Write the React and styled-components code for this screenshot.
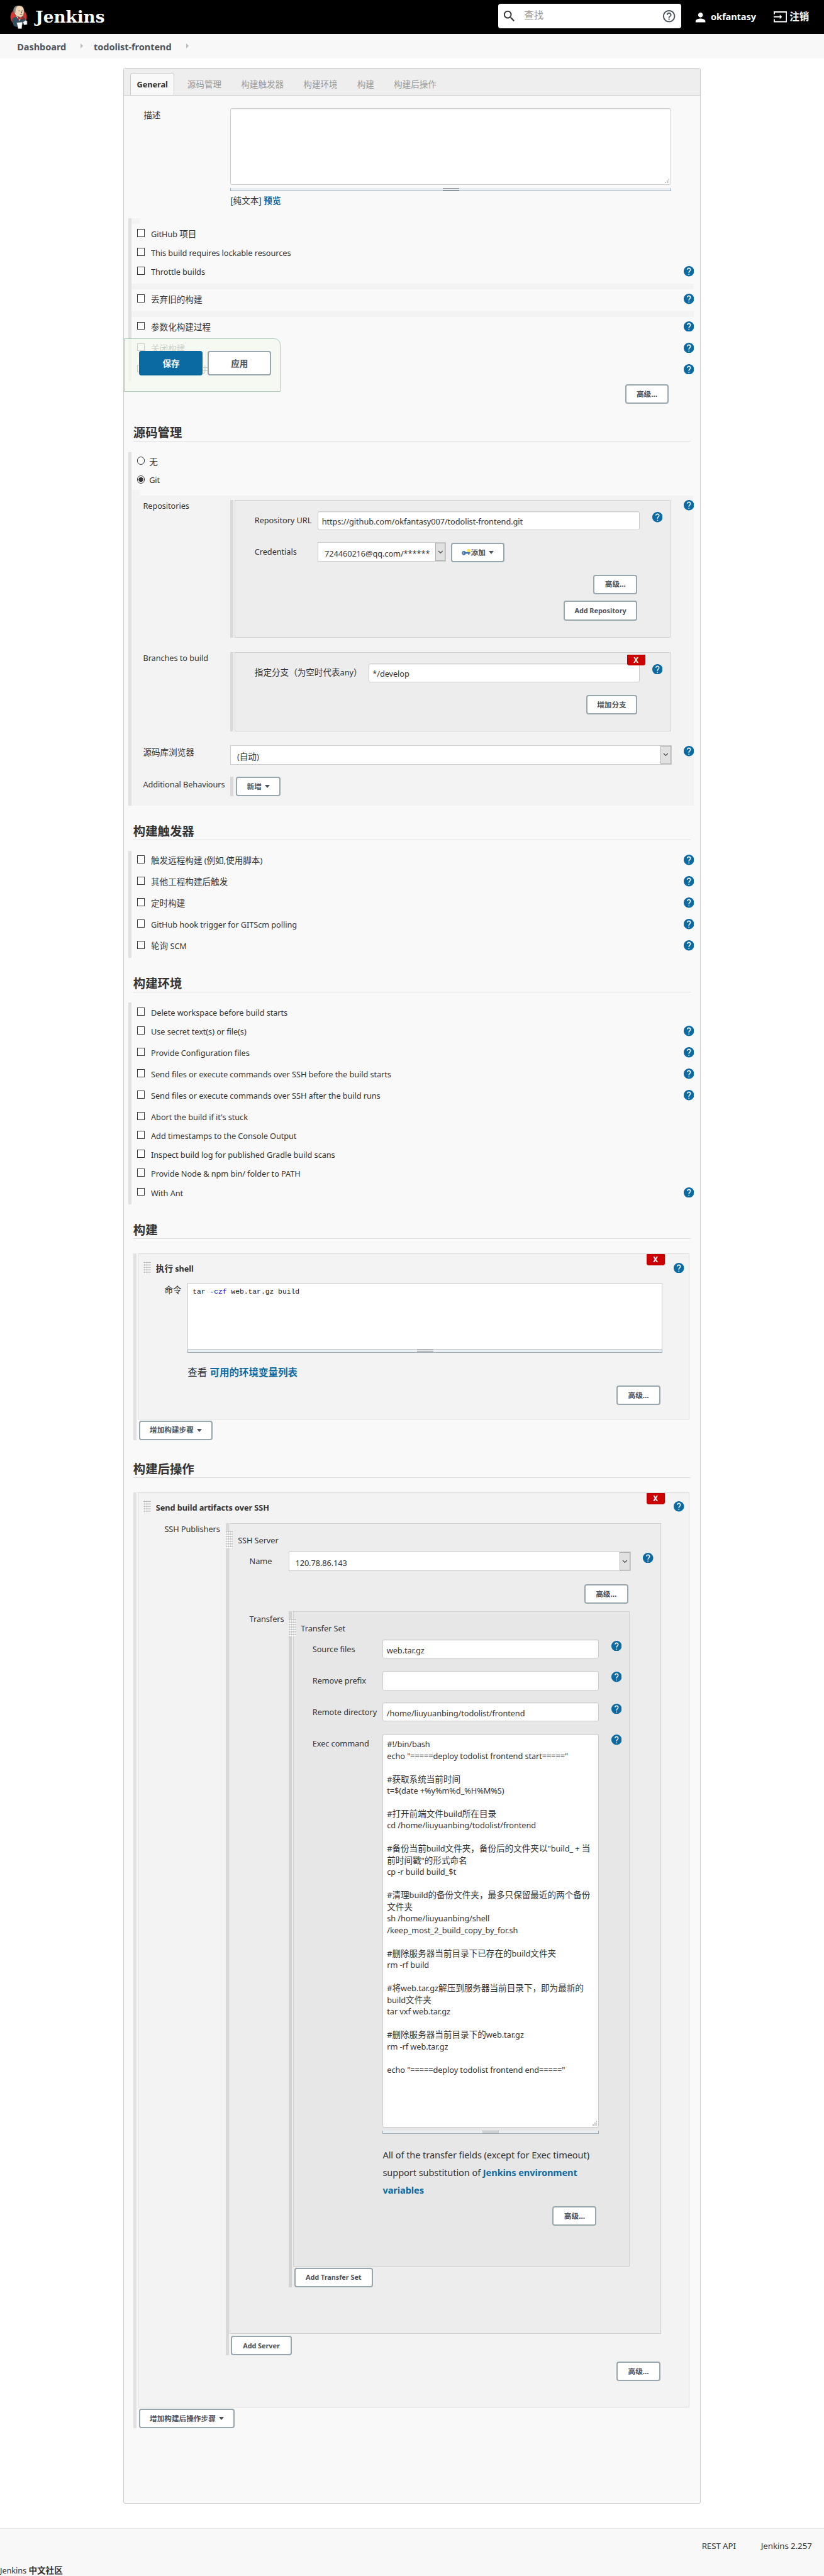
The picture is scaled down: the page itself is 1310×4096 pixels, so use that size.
import React from "react";
import styled, { createGlobalStyle, css } from "styled-components";
import { MdHelp, MdHelpOutline, MdPerson, MdSearch } from "react-icons/md";

const C = {
  text: "#333",
  blue: "#0b6aa2",
  line: "#ccc",
  slate: "#4d545d",
  buttonBorder: "#98a6ae",
};

const GlobalStyle = createGlobalStyle`
  *, *::before, *::after { box-sizing: border-box; }
  body { margin: 0; background: #f8f8f8; }
`;

const Page = styled.div`
  zoom: 0.9712;
  width: 1349px;
  height: 4217px;
  overflow: hidden;
  display: flex;
  flex-direction: column;
  background: #fff;
  color: ${C.text};
  font-family: "Noto Sans", "Noto Sans CJK SC", sans-serif;
  font-size: 14px;
  line-height: 16px;
  white-space: nowrap;
`;

/* Latin runs are set slightly smaller than the ideographs beside them. */
const Latin = styled.span`
  font-size: 0.94em;
  letter-spacing: -0.006em;
`;

function T({ children }) {
  return String(children)
    .split(/([\x20-\x7e]+)/)
    .filter(Boolean)
    .map((part, i) => (/^[\x20-\x7e]/.test(part) ? <Latin key={i}>{part}</Latin> : part));
}

/* ---------- header ---------- */

const Header = styled.header`
  flex: none;
  display: flex;
  height: 56px;
  background: #000;
  color: #fff;
  font-size: 16px;
  font-weight: 700;
`;
const Logo = styled.div`
  display: flex;
  align-items: flex-start;
  padding: 8px 0 0 16px;
  width: 815px;
`;
const LogoName = styled.span`
  margin: 3px 0 0 13px;
  font: 700 27px/32px "DejaVu Serif", serif;
`;
const Search = styled.div`
  display: flex;
  align-items: center;
  width: 300px;
  height: 40px;
  margin-top: 6px;
  padding: 0 8px 0 7px;
  border-radius: 4px;
  background: #fff;
  color: #333;
`;
const Placeholder = styled.span`
  flex: 1;
  margin-left: 12px;
  color: #999;
  font-weight: 400;
`;
const HeaderLink = styled.span`
  display: flex;
  align-items: center;
  height: 24px;
  margin: 16px 0 0 ${(p) => p.$ml}px;
  gap: ${(p) => p.$gap}px;
`;

const Breadcrumbs = styled.nav`
  flex: none;
  display: flex;
  align-items: center;
  height: 40px;
  padding: 1px 0 0 28px;
  background: #f8f8f8;
  color: ${C.slate};
  font-size: 16px;
  font-weight: 700;
`;
const Arrow = styled.i`
  margin: -2px 17px 0 24px;
  border: 4.2px solid transparent;
  border-left-color: #bbb;
  border-right-width: 0;
`;

function Butler() {
  return (
    <svg width="29" height="40" viewBox="0 0 29 40">
      <ellipse cx="14" cy="19.5" rx="13.4" ry="13.5" fill="#d33833" />
      <path d="M6 20 L3 24 L6 34 L11 36 L25 30 L25 23 L20 18 Z" fill="#335061" />
      <path d="M10 18 L15 26 L20 19 L18 16 Z" fill="#fff" />
      <path
        d="M6 9 C6 3 10 1 15 1 C20 1 23 4 23 10 C23 16 21 20 17 20 C13 20 7 18 6 9Z"
        fill="#f0d6b7"
        stroke="#222"
        strokeWidth=".6"
      />
      <path d="M6 12 C4 5 8 1 14 1 C10 3 9 6 9 12 L7 14Z" fill="#8a8a84" />
      <path d="M14 9.5h2M19 9.5h2M16 15.5q2 1 4 0M18 10l1.4 3h-1.6" stroke="#333" strokeWidth=".8" fill="none" />
      <path d="M13 19 l4 2 4-2 v5 l-4-1.500 -4 2z" fill="#d33833" stroke="#500" strokeWidth=".5" />
      <path d="M11 29 L20 28 L19 38.500 L13.500 38.500 Z" fill="#fff" stroke="#999" strokeWidth=".5" />
      <path d="M21 28 l4-3 3 1 v6 l-5 1z" fill="#f4f4f4" stroke="#444" strokeWidth=".6" />
    </svg>
  );
}

function LogoutIcon() {
  return (
    <svg width="22" height="18" viewBox="0 0 22 18" fill="none" stroke="#fff" strokeWidth="1.900">
      <path d="M1 5V1h20v16H1v-4" />
      <path d="M0 9h12" />
      <path d="M10 5.500 13.700 9 10 12.500z" fill="#fff" stroke="none" />
    </svg>
  );
}

/* ---------- panel and tabs ---------- */

const Panel = styled.main`
  position: relative;
  flex: none;
  width: 945px;
  height: 3988px;
  margin: 15px 0 40px 202px;
  border: 1px solid ${C.line};
  border-radius: 3px;
  background: #f9f9f9;
`;
const Tabs = styled.div`
  display: flex;
  align-items: flex-end;
  height: 44px;
  padding-left: 10px;
  border-bottom: 1px solid ${C.line};
  background: #eee;
  color: #999;
`;
const Tab = styled.div`
  height: 37px;
  margin: 0 10px -1px 0;
  padding: 10px 10px 0;
  border: 1px solid transparent;
  border-bottom: 0;
  ${(p) =>
    p.$active &&
    css`
      border-color: ${C.line};
      border-radius: 4px 4px 0 0;
      background: #f9f9f9;
      color: ${C.text};
      font-weight: 700;
    `}
`;

/* ---------- form primitives ---------- */

const Field = styled.div`
  display: flex;
  align-items: flex-start;
  margin-top: ${(p) => p.$mt || 0}px;
`;
const Label = styled.div`
  flex: none;
  width: ${(p) => p.$w}px;
  padding: ${(p) => p.$pt ?? 7}px 0 0 ${(p) => p.$pl || 0}px;
`;
const HelpButton = styled.span`
  display: flex;
  flex: none;
  width: 17px;
  height: 17px;
  margin: ${(p) => p.$mt ?? 1.5}px ${(p) => p.$mr || 0}px 0 ${(p) => (p.$ml === undefined ? "auto" : p.$ml + "px")};
  color: ${C.blue};
`;
function Help(props) {
  return (
    <HelpButton {...props}>
      <MdHelp viewBox="2 2 20 20" size={17} />
    </HelpButton>
  );
}

const Input = styled.div`
  flex: none;
  width: ${(p) => p.$w}px;
  height: ${(p) => p.$h || 31}px;
  padding: 7.5px 5.5px;
  border: 1px solid ${C.line};
  border-radius: 3px;
  background: #fff;
  box-shadow: inset 0 1px 1px rgba(0, 0, 0, 0.075);
`;
const SelectBox = styled.div`
  flex: none;
  display: flex;
  width: ${(p) => p.$w}px;
  height: 32px;
  padding-left: 10px;
  border: 1px solid ${C.line};
  background: #fff;
  line-height: 34px;
`;
const SelectArrow = styled.span`
  display: flex;
  align-items: center;
  justify-content: center;
  width: 17px;
  height: 30px;
  margin-left: auto;
  border: 1px solid #acacac;
  background: #e1e1e1;
`;
function Select({ w, children }) {
  return (
    <SelectBox $w={w}>
      <span><T>{children}</T></span>
      <SelectArrow>
        <svg width="9" height="6" viewBox="0 0 9 6" fill="none" stroke="#444" strokeWidth="1.200">
          <path d="M1 1 4.500 4.500 8 1" />
        </svg>
      </SelectArrow>
    </SelectBox>
  );
}

const Button = styled.span`
  flex: none;
  display: flex;
  align-items: center;
  justify-content: center;
  width: ${(p) => p.$w}px;
  height: 32px;
  margin: ${(p) => p.$mt || 0}px 0 0 ${(p) => p.$ml || 0}px;
  border: 2.1px solid ${C.buttonBorder};
  border-radius: 4px;
  background: #fff;
  color: ${C.slate};
  font-size: 12px;
  font-weight: 700;
`;
const Caret = styled.i`
  flex: none;
  margin-left: 5px;
  border: 4.2px solid transparent;
  border-top: 5.2px solid ${C.slate};
  border-bottom: 0;
`;
const RemoveButton = styled.span`
  position: absolute;
  top: ${(p) => p.$top}px;
  right: 40px;
  width: 30px;
  height: 18px;
  border: 1px solid #b00;
  border-radius: 0 0 3px 3px;
  background: #c00;
  color: #fff;
  font-size: 12px;
  font-weight: 700;
  line-height: 17px;
  text-align: center;
`;

const TextArea = styled.div`
  position: relative;
  flex: none;
  width: ${(p) => p.$w}px;
  height: ${(p) => p.$h}px;
  padding: 6.5px 6px;
  border: 1px solid ${C.line};
  border-radius: 3px;
  background: #fff;
  box-shadow: inset 0 1px 1px rgba(0, 0, 0, 0.075);
  line-height: 19.03px;
  white-space: pre;
`;
const Grip = styled.svg`
  position: absolute;
  right: 2px;
  bottom: 2px;
`;
function ResizeGrip() {
  return (
    <Grip width="8" height="8" viewBox="0 0 8 8" fill="#b4b4b4">
      <path d="M6 0h2v2H6zM6 3h2v2H6zM3 3h2v2H3zM6 6h2v2H6zM3 6h2v2H3zM0 6h2v2H0z" />
    </Grip>
  );
}
const ResizeBar = styled.div`
  display: flex;
  justify-content: center;
  width: ${(p) => p.$w}px;
  height: 5.2px;
  margin-top: ${(p) => p.$mt || 0}px;
  border: 1px solid #9aabb5;
  border-top: 0;
  background: #e8eef1;
  &::after {
    content: "";
    width: 27px;
    height: 4px;
    border: 1px solid #888;
    border-width: 1px 0;
  }
`;

const Link = styled.span`
  color: ${C.blue};
  font-weight: 700;
`;
const Note = styled.div`
  margin: ${(p) => p.$m};
  font-size: ${(p) => p.$size || 14}px;
  line-height: ${(p) => p.$lh || 16}px;
`;

const DragHandle = styled.i`
  flex: none;
  width: 12px;
  height: ${(p) => p.$h}px;
  margin: ${(p) => p.$m};
  background: radial-gradient(circle at 1.5px 1.5px, #bbb 1px, #fff 1.2px) 0 0 / 3px 4px;
`;

/* ---------- option lists ---------- */

const List = styled.div`
  width: 926px;
  margin-left: 7px;
  border-left: 5.2px solid #e0e0e0;
`;
const Option = styled.div`
  display: flex;
  align-items: flex-start;
  height: ${(p) => (p.$help ? 35 : 31)}px;
  padding: 8px 0 0 9px;
`;
const Check = styled.i`
  width: 13px;
  height: 13px;
  margin-right: 10px;
  border: 1px solid #333;
  background: #fff;
`;
const Radio = styled.i`
  width: 13px;
  height: 13px;
  margin-right: 7px;
  border: 1px solid #333;
  border-radius: 50%;
  background: ${(p) => (p.$on ? "radial-gradient(circle, #333 3.4px, #fff 4.200px)" : "#fff")};
`;
const Band = styled.div`
  width: ${(p) => (p.$w ? p.$w + "px" : "auto")};
  height: 10px;
  background: #f3f3f3;
`;
function Options({ items }) {
  return items.map(([label, help]) => (
    <Option key={label} $help={help}>
      <Check />
      <span><T>{label}</T></span>
      {help && <Help $mt={-1} />}
    </Option>
  ));
}

const Heading = styled.h2`
  display: flex;
  align-items: flex-end;
  width: 913px;
  height: 57px;
  margin: 0 0 ${(p) => p.$mb || 17}px 15px;
  padding-bottom: 1px;
  border-bottom: 1px solid #ddd;
  font-size: 20px;
  font-weight: 700;
  line-height: 25px;
`;

/* ---------- nested containers ---------- */

const shades = ["#f3f3f3", "#ededed", "#e7e7e7"];
const rails = ["#e0e0e0", "#d9d9d9", "#d3d3d3"];
const Rail = styled.div`
  flex: none;
  width: ${(p) => p.$w}px;
  margin-left: ${(p) => p.$ml || 0}px;
  margin-bottom: ${(p) => p.$mb || 0}px;
  padding-left: 2px;
  border-left: 5.2px solid ${(p) => rails[p.$level]};
`;
const Box = styled.section`
  position: relative;
  height: ${(p) => p.$h}px;
  border: 1px solid ${(p) => (p.$level ? "#d0d0d0" : "#dadada")};
  background: ${(p) => shades[p.$level]};
`;
const SourceBody = styled.div`
  height: 507px;
  padding-top: 7px;
  background: #f3f3f3;
`;
const BoxTitle = styled.div`
  display: flex;
  font-weight: ${(p) => (p.$bold ? 700 : 400)};
  height: ${(p) => p.$h}px;
`;
const TitleText = styled.span`
  margin: ${(p) => p.$m};
`;
const Code = styled.pre`
  width: 777px;
  height: 109px;
  margin: 0;
  padding: 6px 7px;
  border: 1px solid ${C.line};
  background: #fff;
  color: #111;
  font: 11.67px/16px "Liberation Mono", monospace;
`;
const Flag = styled.span`
  color: #00c;
`;
const Column = styled.div`
  display: flex;
  flex-direction: column;
`;

const SaveBar = styled.div`
  position: absolute;
  top: 442px;
  left: 0;
  display: flex;
  gap: 8px;
  width: 256px;
  height: 87px;
  padding: 20px 0 0 24px;
  border: 1px solid #a9cfba;
  border-radius: 0 10px 0 0;
  background: rgba(244, 248, 240, 0.78);
`;
const BigButton = styled.span`
  width: 104px;
  height: 40px;
  border: 2.1px solid ${(p) => (p.$primary ? C.blue : C.buttonBorder)};
  border-radius: 4px;
  background: ${(p) => (p.$primary ? C.blue : "#fff")};
  color: ${(p) => (p.$primary ? "#fff" : C.slate)};
  font-weight: 700;
  line-height: 37px;
  text-align: center;
`;

const Footer = styled.footer`
  flex: 1;
  border-top: 1px solid #e8e8e8;
  background: #f8f8f8;
`;
const FooterLinks = styled.div`
  display: flex;
  justify-content: flex-end;
  gap: 41px;
  height: 60px;
  padding: 20px 20px 0 0;
  font-size: 14.6px;
`;

const SCRIPT = `#!/bin/bash
echo "=====deploy todolist frontend start====="

#获取系统当前时间
t=$(date +%y%m%d_%H%M%S)

#打开前端文件build所在目录
cd /home/liuyuanbing/todolist/frontend

#备份当前build文件夹，备份后的文件夹以"build_ + 当
前时间戳"的形式命名
cp -r build build_$t

#清理build的备份文件夹，最多只保留最近的两个备份
文件夹
sh /home/liuyuanbing/shell
/keep_most_2_build_copy_by_for.sh

#删除服务器当前目录下已存在的build文件夹
rm -rf build

#将web.tar.gz解压到服务器当前目录下，即为最新的
build文件夹
tar vxf web.tar.gz

#删除服务器当前目录下的web.tar.gz
rm -rf web.tar.gz

echo "=====deploy todolist frontend end====="`;

function KeyIcon() {
  return (
    <svg width="15" height="14" viewBox="0 0 15 14">
      <circle cx="11.500" cy="3.500" r="2.800" fill="#fce94f" />
      <ellipse cx="3.500" cy="7.500" rx="3.300" ry="3.500" fill="#4a7ab5" />
      <path d="M6 6h8v2.800h-1.500v1.500h-2V8.800H6z" fill="#4a7ab5" />
      <circle cx="2.600" cy="7.500" r="1" fill="#c5d8ee" />
    </svg>
  );
}

function General() {
  return (
    <>
      <Field $mt={21}>
        <Label $w={174} $pl={32} $pt={3}>描述</Label>
        <Column>
          <TextArea $w={722} $h={126}><ResizeGrip /></TextArea>
          <ResizeBar $w={722} $mt={5} />
          <Note $m="7px 0 0">[纯文本] <Link>预览</Link></Note>
        </Column>
      </Field>
      <Field $mt={20.8} />
      <List>
        <Band $w={14} />
        <Options items={[["GitHub 项目"], ["This build requires lockable resources"], ["Throttle builds", true]]} />
        <Band />
        <Options items={[["丢弃旧的构建", true]]} />
        <Band />
        <Options items={[["参数化构建过程", true], ["关闭构建", true], ["在必要的时候并发构建", true]]} />
      </List>
      <Field $mt={5}>
        <Button $w={72} $ml={820}>高级...</Button>
      </Field>
      <Field $mt={5} />
    </>
  );
}

function SourceControl() {
  return (
    <List>
      <Option><Radio />无</Option>
      <Option><Radio $on /><T>Git</T></Option>
      <Band $w={14} />
      <SourceBody>
        <Field>
          <Label $w={162} $pl={19} $pt={1}><T>Repositories</T></Label>
          <Rail $w={720} $level={1}>
            <Box $h={225} $level={1}>
              <Field $mt={17}>
                <Label $w={135} $pl={31.5}><T>Repository URL</T></Label>
                <Input $w={527}><T>https://github.com/okfantasy007/todolist-frontend.git</T></Input>
                <Help $ml={20} />
              </Field>
              <Field $mt={20}>
                <Label $w={135} $pl={31.5}><T>Credentials</T></Label>
                <Select w={210}>724460216@qq.com/******</Select>
                <Button $w={87} $ml={8} $mt={1}><KeyIcon />添加<Caret /></Button>
              </Field>
              <Field $mt={20}><Button $w={72} $ml={586}>高级...</Button></Field>
              <Field $mt={11}><Button $w={121} $ml={537}><T>Add Repository</T></Button></Field>
            </Box>
          </Rail>
          <Help $mt={0} />
        </Field>
        <Field $mt={24}>
          <Label $w={162} $pl={19} $pt={1}><T>Branches to build</T></Label>
          <Rail $w={720} $level={1}>
            <Box $h={130} $level={1}>
              <Field $mt={17}>
                <Label $w={218} $pl={31.5}><T>指定分支（为空时代表any）</T></Label>
                <Input $w={444}><T>*/develop</T></Input>
                <Help $ml={20} />
              </Field>
              <Field $mt={21}><Button $w={84} $ml={574}>增加分支</Button></Field>
              <RemoveButton $top={3}>X</RemoveButton>
            </Box>
          </Rail>
        </Field>
        <Field $mt={22}>
          <Label $w={162} $pl={19} $pt={4}>源码库浏览器</Label>
          <Select w={722}>(自动)</Select>
          <Help />
        </Field>
        <Field $mt={20}>
          <Label $w={162} $pl={19} $pt={4}><T>Additional Behaviours</T></Label>
          <Rail $w={90} $level={1}>
            <Button $w={73} $ml={2}>新增<Caret /></Button>
          </Rail>
        </Field>
      </SourceBody>
    </List>
  );
}

function BuildSteps() {
  return (
    <Rail $w={911} $ml={15} $mb={5} $level={0}>
      <Box $h={271} $level={0}>
        <BoxTitle $bold $h={47}>
          <DragHandle $h={21} $m="12px 8px 0 9px" />
          <TitleText $m="15px 0 0"><T>执行 shell</T></TitleText>
          <Help $mr={8} $mt={13.5} />
        </BoxTitle>
        <Field>
          <Label $w={81} $pl={43} $pt={3}>命令</Label>
          <Column>
            <Code>tar <Flag>-czf</Flag> web.tar.gz build</Code>
            <ResizeBar $w={777} />
            <Note $m="23px 0 0" $size={16} $lh={20}>查看 <Link>可用的环境变量列表</Link></Note>
          </Column>
        </Field>
        <Field $mt={11}><Button $w={72} $ml={783}>高级...</Button></Field>
        <RemoveButton $top={0}>X</RemoveButton>
      </Box>
      <Field $mt={2}><Button $w={121} $ml={2}>增加构建步骤<Caret /></Button></Field>
    </Rail>
  );
}

function TransferSet() {
  return (
    <Box $h={1073} $level={2}>
      <BoxTitle $h={46}>
        <DragHandle $h={29} $m="12px 8px 0 -8px" />
        <TitleText $m="19px 0 0"><T>Transfer Set</T></TitleText>
      </BoxTitle>
      <Field>
        <Label $w={146} $pl={31}><T>Source files</T></Label>
        <Input $w={354}><T>web.tar.gz</T></Input>
        <Help $ml={20} />
      </Field>
      <Field $mt={20}>
        <Label $w={146} $pl={31}><T>Remove prefix</T></Label>
        <Input $w={354} $h={32} />
        <Help $ml={20} />
      </Field>
      <Field $mt={20}>
        <Label $w={146} $pl={31}><T>Remote directory</T></Label>
        <Input $w={354}><T>/home/liuyuanbing/todolist/frontend</T></Input>
        <Help $ml={20} />
      </Field>
      <Field $mt={20}>
        <Label $w={146} $pl={31}><T>Exec command</T></Label>
        <Column>
          <TextArea $w={354} $h={645}>
            {SCRIPT.split("\n").map((line, i) => (
              <React.Fragment key={i}><T>{line}</T>{"\n"}</React.Fragment>
            ))}
            <ResizeGrip />
          </TextArea>
          <ResizeBar $w={354} $mt={5} />
          <Note $m="21px 0 0" $size={16} $lh={28.8}>
            <T>All of the transfer fields (except for Exec timeout)</T><br />
            <T>support substitution of </T><Link><T>Jenkins environment</T></Link><br />
            <Link><T>variables</T></Link>
          </Note>
        </Column>
        <Help $ml={20} />
      </Field>
      <Field $mt={11}><Button $w={72} $ml={424}>高级...</Button></Field>
    </Box>
  );
}

function SshServer() {
  return (
    <Box $h={1328} $level={1}>
      <BoxTitle $h={46}>
        <DragHandle $h={29} $m="12px 8px 0 -8px" />
        <TitleText $m="19px 0 0"><T>SSH Server</T></TitleText>
      </BoxTitle>
      <Field>
        <Label $w={95} $pl={31}><T>Name</T></Label>
        <Select w={560}>120.78.86.143</Select>
        <Help $ml={20} />
      </Field>
      <Field $mt={21}><Button $w={72} $ml={579}>高级...</Button></Field>
      <Field $mt={12}>
        <Label $w={95} $pl={31} $pt={5}><T>Transfers</T></Label>
        <Rail $w={558} $level={2}>
          <TransferSet />
          <Field $mt={2}><Button $w={129} $ml={2}><T>Add Transfer Set</T></Button></Field>
        </Rail>
      </Field>
    </Box>
  );
}

function PostBuild() {
  return (
    <Rail $w={911} $ml={15} $level={0}>
      <Box $h={1498} $level={0}>
        <BoxTitle $bold $h={49}>
          <DragHandle $h={21} $m="12px 8px 0 9px" />
          <TitleText $m="15px 0 0"><T>Send build artifacts over SSH</T></TitleText>
          <Help $mr={8} $mt={13.5} />
        </BoxTitle>
        <Field>
          <Label $w={143} $pl={43} $pt={1}><T>SSH Publishers</T></Label>
          <Rail $w={713} $level={1}>
            <SshServer />
            <Field $mt={3}><Button $w={99} $ml={2}><T>Add Server</T></Button></Field>
          </Rail>
        </Field>
        <Field $mt={10}><Button $w={72} $ml={783}>高级...</Button></Field>
        <RemoveButton $top={0}>X</RemoveButton>
      </Box>
      <Field $mt={2}><Button $w={157} $ml={2}>增加构建后操作步骤<Caret /></Button></Field>
    </Rail>
  );
}

export default function App() {
  return (
    <Page>
      <GlobalStyle />
      <Header>
        <Logo><Butler /><LogoName>Jenkins</LogoName></Logo>
        <Search>
          <MdSearch size={24} />
          <Placeholder>查找</Placeholder>
          <MdHelpOutline size={24} color={C.slate} />
        </Search>
        <HeaderLink $ml={20} $gap={4.5}><MdPerson size={24} /><T>okfantasy</T></HeaderLink>
        <HeaderLink $ml={28.5} $gap={4.5}><LogoutIcon />注销</HeaderLink>
      </Header>
      <Breadcrumbs>
        <T>Dashboard</T><Arrow /><T>todolist-frontend</T><Arrow />
      </Breadcrumbs>
      <Panel>
        <Tabs>
          <Tab $active><T>General</T></Tab>
          {["源码管理", "构建触发器", "构建环境", "构建", "构建后操作"].map((t) => (
            <Tab key={t}>{t}</Tab>
          ))}
        </Tabs>
        <General />
        <Heading>源码管理</Heading>
        <SourceControl />
        <Heading>构建触发器</Heading>
        <List>
          <Options
            items={[
              ["触发远程构建 (例如,使用脚本)", true],
              ["其他工程构建后触发", true],
              ["定时构建", true],
              ["GitHub hook trigger for GITScm polling", true],
              ["轮询 SCM", true],
            ]}
          />
        </List>
        <Heading>构建环境</Heading>
        <List>
          <Options
            items={[
              ["Delete workspace before build starts"],
              ["Use secret text(s) or file(s)", true],
              ["Provide Configuration files", true],
              ["Send files or execute commands over SSH before the build starts", true],
              ["Send files or execute commands over SSH after the build runs", true],
              ["Abort the build if it's stuck"],
              ["Add timestamps to the Console Output"],
              ["Inspect build log for published Gradle build scans"],
              ["Provide Node & npm bin/ folder to PATH"],
              ["With Ant", true],
            ]}
          />
        </List>
        <Heading $mb={24}>构建</Heading>
        <BuildSteps />
        <Heading $mb={24}>构建后操作</Heading>
        <PostBuild />
        <SaveBar>
          <BigButton $primary>保存</BigButton>
          <BigButton>应用</BigButton>
        </SaveBar>
      </Panel>
      <Footer>
        <FooterLinks><span><T>REST API</T></span><span><T>Jenkins 2.257</T></span></FooterLinks>
        <T>Jenkins </T><b>中文社区</b>
      </Footer>
    </Page>
  );
}
